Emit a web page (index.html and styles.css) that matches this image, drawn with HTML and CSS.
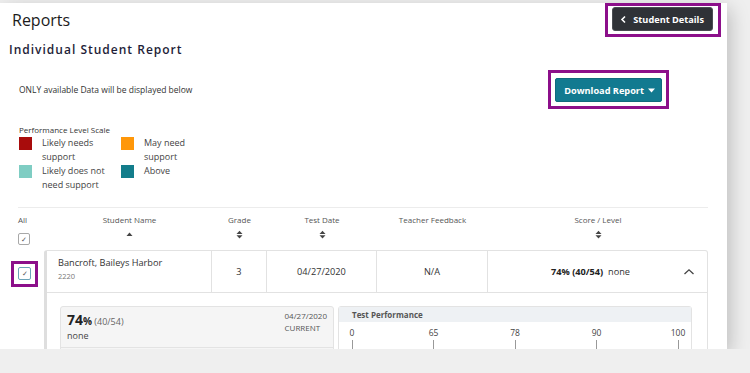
FILE: index.html
```html
<!DOCTYPE html>
<html lang="en">
<head>
    <meta charset="UTF-8">
    <title>Reports</title>
    <link rel="stylesheet" href="styles.css">
</head>
<body>
    <div class="page">
        <div class="topbar">
            <h1>Reports</h1>
            <span class="focus-ring ring-back">
                <button class="btn-back">
                    <svg width="8" height="9" viewBox="0 0 8 9"><polyline points="5,1.5 2,4.5 5,7.5" fill="none" stroke="#fff" stroke-width="1.6"/></svg>
                    Student Details
                </button>
            </span>
        </div>
        <h2 class="subtitle">Individual Student Report</h2>

        <div class="toolbar">
            <p class="note">ONLY available Data will be displayed below</p>
            <span class="focus-ring ring-download">
                <button class="btn-download">Download Report
                    <svg width="7" height="5" viewBox="0 0 7 5"><polygon points="0,0.5 7,0.5 3.5,4.5" fill="#fff"/></svg>
                </button>
            </span>
        </div>

        <div class="legend">
            <div class="legend-title">Performance Level Scale</div>
            <div class="legend-grid">
                <div class="legend-item"><span class="swatch red"></span><span>Likely needs<br>support</span></div>
                <div class="legend-item"><span class="swatch orange"></span><span>May need<br>support</span></div>
                <div class="legend-item"><span class="swatch mint"></span><span>Likely does not<br>need support</span></div>
                <div class="legend-item"><span class="swatch teal"></span><span>Above</span></div>
            </div>
        </div>

        <div class="table">
            <div class="thead">
                <div class="th th-all">All<span class="checkbox">&#10003;</span></div>
                <div class="th">Student Name
                    <svg width="7" height="9" viewBox="0 0 7 9"><polygon points="0.5,6 6.5,6 3.5,2.5" fill="#444"/></svg>
                </div>
                <div class="th">Grade
                    <svg width="7" height="9" viewBox="0 0 7 9"><polygon points="0.5,4 6.5,4 3.5,0.8" fill="#444"/><polygon points="0.5,5.2 6.5,5.2 3.5,8.4" fill="#444"/></svg>
                </div>
                <div class="th">Test Date
                    <svg width="7" height="9" viewBox="0 0 7 9"><polygon points="0.5,4 6.5,4 3.5,0.8" fill="#444"/><polygon points="0.5,5.2 6.5,5.2 3.5,8.4" fill="#444"/></svg>
                </div>
                <div class="th">Teacher Feedback</div>
                <div class="th">Score / Level
                    <svg width="7" height="9" viewBox="0 0 7 9"><polygon points="0.5,4 6.5,4 3.5,0.8" fill="#444"/><polygon points="0.5,5.2 6.5,5.2 3.5,8.4" fill="#444"/></svg>
                </div>
            </div>

            <div class="row">
                <div class="row-select">
                    <span class="focus-ring ring-check"><span class="checkbox checked">&#10003;</span></span>
                </div>
                <div class="row-box">
                    <div class="cells">
                        <div class="cell cell-name">
                            <div class="student">Bancroft, Baileys Harbor</div>
                            <div class="student-id">2220</div>
                        </div>
                        <div class="cell">3</div>
                        <div class="cell">04/27/2020</div>
                        <div class="cell">N/A</div>
                        <div class="cell cell-score">
                            <span class="score"><b>74% (40/54)</b>&nbsp; none</span>
                            <svg width="12" height="8" viewBox="0 0 12 8"><polyline points="1.5,6 6,1.8 10.5,6" fill="none" stroke="#444" stroke-width="1.3"/></svg>
                        </div>
                    </div>
                    <div class="details">
                        <div class="summary-card">
                            <div class="summary-top">
                                <div>
                                    <div class="big-score"><b class="pct">74</b><b class="pct-sign">%</b> (40/54)</div>
                                    <div class="level">none</div>
                                </div>
                                <div class="test-date">04/27/2020<br>CURRENT</div>
                            </div>
                            <div class="summary-bottom"></div>
                        </div>
                        <div class="perf-card">
                            <div class="perf-head">Test Performance</div>
                            <div class="axis">
                                <div class="tick"><span>0</span><i></i></div>
                                <div class="tick"><span>65</span><i></i></div>
                                <div class="tick"><span>78</span><i></i></div>
                                <div class="tick"><span>90</span><i></i></div>
                                <div class="tick"><span>100</span><i></i></div>
                            </div>
                        </div>
                    </div>
                </div>
            </div>
        </div>
    </div>
</body>
</html>
```

FILE: styles.css
```css
body {
    margin: 0;
    background-color: #efefef;
    font-family: "Open Sans", Arial, sans-serif;
    color: #333;
}

.page {
    width: 727px;
    height: 346px;
    margin-top: 3px;
    background: white;
    overflow: hidden;
    box-shadow: 3px 6px 18px rgba(0, 0, 0, 0.22);
}

/* purple focus frames around the highlighted controls */
.focus-ring {
    display: inline-flex;
    border: 3px solid #8c0f8a;
}

.ring-back {
    padding: 1px 5px 3px 4px;
}

.ring-download {
    padding: 5px 4px 4px 4px;
}

.ring-check {
    margin-left: -7px;
    padding: 3px 4px 4px 4px;
}

.topbar {
    display: flex;
    justify-content: space-between;
    align-items: flex-start;
    padding: 0 6px 0 12px;
}

h1 {
    margin: 6px 0 0;
    font-size: 16px;
    font-weight: 400;
    line-height: 22px;
    color: #1b1b1b;
}

.btn-back {
    display: flex;
    align-items: center;
    gap: 5px;
    height: 24px;
    padding: 0 8px 0 7px;
    border: 1px solid #4a4d52;
    border-radius: 3px;
    background-color: #2f3237;
    color: white;
    font-family: inherit;
    font-size: 9.2px;
    font-weight: 700;
}

.subtitle {
    margin: 4px 0 0 9px;
    font-size: 12px;
    font-weight: 600;
    letter-spacing: 1px;
    color: #1e1e38;
}

.toolbar {
    display: flex;
    justify-content: space-between;
    align-items: center;
    margin-top: 12px;
    padding: 0 58px 0 19px;
}

.note {
    margin: 0;
    font-size: 8.5px;
    color: #333;
}

.btn-download {
    display: flex;
    align-items: center;
    gap: 4px;
    height: 24px;
    padding: 0 6px 0 8px;
    border: 1px solid #0f6a7e;
    border-radius: 2px;
    background-color: #127a90;
    color: white;
    font-family: inherit;
    font-size: 9.2px;
    font-weight: 700;
}

.legend {
    margin: 15px 0 0 19px;
}

.legend-title {
    font-size: 8px;
    color: #333;
}

.legend-grid {
    display: grid;
    grid-template-columns: 102px 100px;
    margin-top: 1px;
}

.legend-item {
    display: flex;
    gap: 10px;
    font-size: 9px;
    line-height: 14px;
    color: #444;
}

.swatch {
    flex: none;
    width: 13px;
    height: 13px;
    margin-top: 1px;
}

.red { background-color: #a80c0c; }
.orange { background-color: #ff9709; }
.mint { background-color: #7fcdc3; }
.teal { background-color: #137d8b; }

.table {
    margin: 15px 19px 0 18px;
    border-top: 1px solid #ececec;
}

.thead {
    display: grid;
    grid-template-columns: 29px 165px 55px 110px 111px 220px;
    padding-top: 6px;
    height: 36px;
}

.th {
    display: flex;
    flex-direction: column;
    align-items: center;
    gap: 5px;
    font-size: 8px;
    color: #555;
}

.th-all {
    align-items: flex-start;
    gap: 8px;
}

.checkbox {
    display: flex;
    align-items: center;
    justify-content: center;
    width: 10px;
    height: 10px;
    border: 1px solid #a8a8a8;
    border-radius: 2px;
    font-size: 7px;
    color: #555;
}

.checkbox.checked {
    width: 11px;
    height: 11px;
    border-color: #6aa3b8;
}

.row {
    display: flex;
}

.row-select {
    width: 26px;
    padding-top: 9px;
}

.row-box {
    flex: 1;
    border: 1px solid #e2e2e2;
    border-left: 3px solid #dedede;
    border-radius: 3px 3px 0 0;
}

.cells {
    display: grid;
    grid-template-columns: 165px 55px 110px 111px 1fr;
    height: 41px;
    border-bottom: 1px solid #e2e2e2;
}

.cell {
    display: flex;
    align-items: center;
    justify-content: center;
    border-right: 1px solid #e2e2e2;
    font-size: 9.2px;
    color: #333;
}

.cell:last-child {
    border-right: none;
}

.cell-name {
    flex-direction: column;
    align-items: flex-start;
    justify-content: flex-start;
    padding: 5px 0 0 11px;
}

.student {
    font-size: 9.2px;
    line-height: 14px;
    color: #333;
}

.student-id {
    font-size: 7.5px;
    line-height: 12px;
    color: #777;
}

.cell-score {
    justify-content: space-between;
    padding: 0 12px 0 63px;
}

.score b {
    color: #222;
}

.details {
    display: flex;
    gap: 4px;
    padding: 13px 15px 0 13px;
}

.summary-card {
    width: 272px;
    border: 1px solid #e3e3e3;
    border-radius: 3px;
    background-color: #f5f5f5;
}

.summary-top {
    display: flex;
    justify-content: space-between;
    padding: 3px 6px 4px 6px;
    height: 33px;
    border-bottom: 1px solid #e3e3e3;
}

.big-score {
    margin-top: 0;
    font-size: 9px;
    color: #666;
}

.pct {
    font-size: 14px;
    color: #222;
}

.pct-sign {
    font-size: 10px;
    color: #222;
}

.level {
    font-size: 9px;
    color: #444;
}

.test-date {
    font-size: 8px;
    line-height: 12px;
    color: #555;
}

.summary-bottom {
    height: 20px;
}

.perf-card {
    flex: 1;
    border: 1px solid #e3e3e3;
    border-radius: 3px;
}

.perf-head {
    height: 15px;
    padding-left: 13px;
    background-color: #eef1f4;
    font-size: 8px;
    font-weight: 700;
    line-height: 15px;
    color: #555;
}

.axis {
    display: flex;
    justify-content: space-between;
    padding: 5px 13px 0 13px;
}

.tick {
    display: flex;
    flex-direction: column;
    align-items: center;
    width: 0;
    font-size: 8.5px;
    color: #444;
}

.tick i {
    display: block;
    width: 1px;
    height: 16px;
    margin-top: 2px;
    background-color: #999;
}
```
